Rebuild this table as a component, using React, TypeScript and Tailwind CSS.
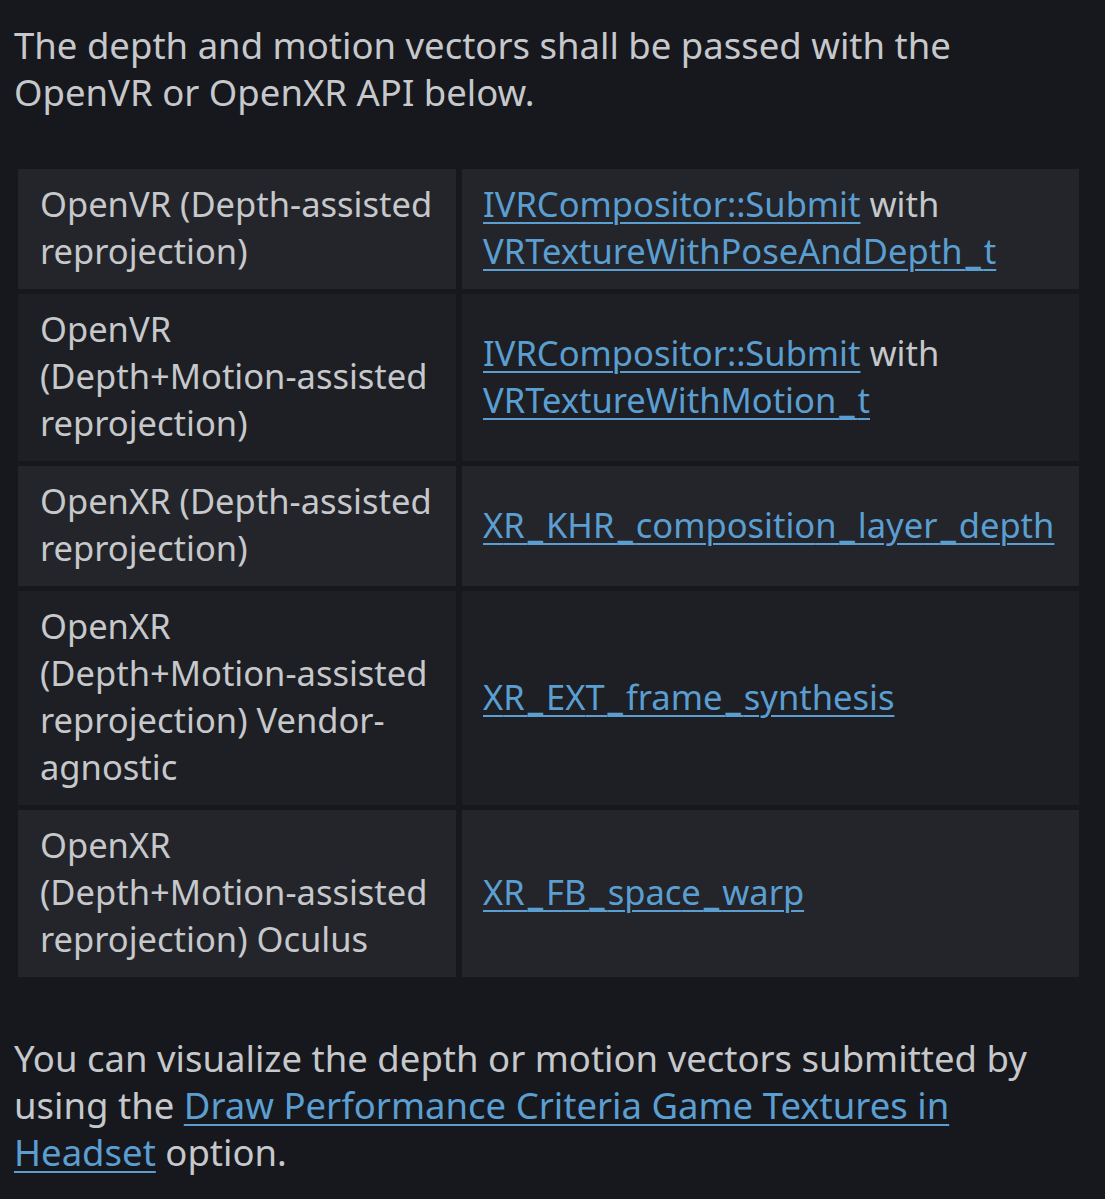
import React from "react";

const L = ({ children }: { children: React.ReactNode }) => (
  <a href="#" className="text-[#5b9fd2] underline decoration-[2px] underline-offset-[5px]">
    {children}
  </a>
);

const U = ({ t }: { t: string }) => {
  const parts = t.split("_");
  return (
    <>
      {parts.map((p, i) => {
        const last = i === parts.length - 1;
        if (last) return <React.Fragment key={i}>{p}</React.Fragment>;
        return (
          <React.Fragment key={i}>
            {p.slice(0, -1)}
            <span className="tracking-[3px]">{p.slice(-1)}_</span>
          </React.Fragment>
        );
      })}
    </>
  );
};

type Row = { left: React.ReactNode; right: React.ReactNode; light: boolean };

const rows: Row[] = [
  {
    left: <>OpenVR (Depth-assisted reprojection)</>,
    right: (
      <>
        <L>IVRCompositor::Submit</L> with{" "}
        <L>
          <U t="VRTextureWithPoseAndDepth_t" />
        </L>
      </>
    ),
    light: true,
  },
  {
    left: (
      <>
        OpenVR
        <br />
        (Depth+Motion-assisted reprojection)
      </>
    ),
    right: (
      <>
        <L>IVRCompositor::Submit</L> with
        <br />
        <L>
          <U t="VRTextureWithMotion_t" />
        </L>
      </>
    ),
    light: false,
  },
  {
    left: <>OpenXR (Depth-assisted reprojection)</>,
    right: (
      <L>
        <U t="XR_KHR_composition_layer_depth" />
      </L>
    ),
    light: true,
  },
  {
    left: (
      <>
        OpenXR
        <br />
        (Depth+Motion-assisted reprojection) Vendor-agnostic
      </>
    ),
    right: (
      <L>
        <U t="XR_EXT_frame_synthesis" />
      </L>
    ),
    light: false,
  },
  {
    left: (
      <>
        OpenXR
        <br />
        (Depth+Motion-assisted reprojection) Oculus
      </>
    ),
    right: (
      <L>
        <U t="XR_FB_space_warp" />
      </L>
    ),
    light: true,
  },
];

export default function App() {
  return (
    <div
      className="w-[1105px] h-[1199px] overflow-hidden bg-[#16181d] text-[#c6c8cb] leading-[47px]"
      style={{ fontFamily: '"Noto Sans", "Open Sans", sans-serif' }}
    >
      <p className="pl-[14px] pr-[20px] pt-[22px] text-[36.5px]">
        The depth and motion vectors shall be passed with the OpenVR or OpenXR API below.
      </p>
      <div className="mt-[53px] ml-[18px] w-[1061px] grid grid-cols-[438px_617px] gap-x-[6px] gap-y-[5px] text-[34.5px]">
        {rows.map((r, i) => (
          <React.Fragment key={i}>
            <div
              className={`${r.light ? "bg-[#23252a]" : "bg-[#1d1f24]"} pl-[22px] pr-[6px] pt-[11px] pb-[15px] flex items-center`}
            >
              <div>{r.left}</div>
            </div>
            <div
              className={`${r.light ? "bg-[#23252a]" : "bg-[#1d1f24]"} pl-[21px] pr-[6px] pt-[11px] pb-[15px] flex items-center`}
            >
              <div>{r.right}</div>
            </div>
          </React.Fragment>
        ))}
      </div>
      <p className="pl-[14px] pr-[50px] mt-[58px] text-[36.5px]">
        You can visualize the depth or motion vectors submitted by using the{" "}
        <L>Draw Performance Criteria Game Textures in Headset</L> option.
      </p>
    </div>
  );
}
